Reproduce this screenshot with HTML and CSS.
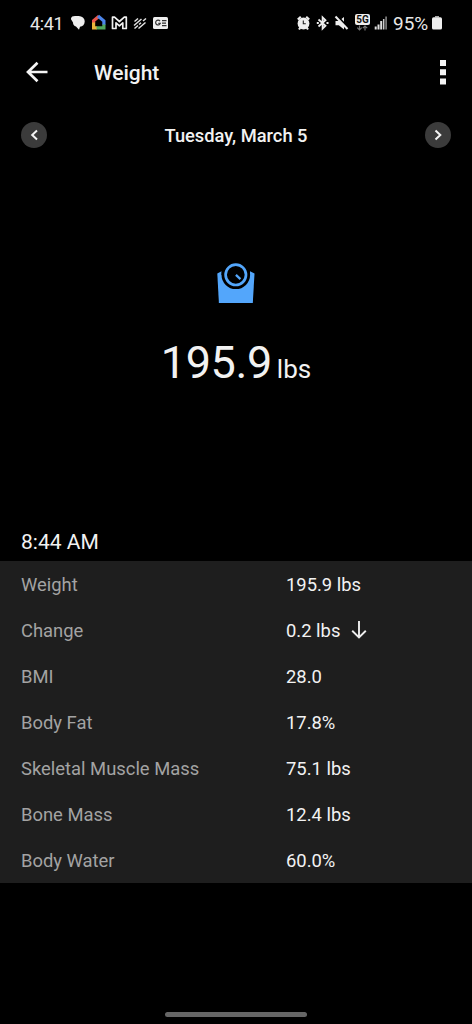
FILE: index.html
```html
<!DOCTYPE html>
<html lang="en">
<head>
<meta charset="utf-8">
<title>Weight</title>
<link rel="stylesheet" href="styles.css">
</head>
<body>
<div class="screen">
  <div class="status">
    <span class="clock">4:41</span>
    <svg class="notifications" width="98" height="18" viewBox="71 14 98 18">
      <path fill="#eee" d="M75 16h3.500a6 5.300 0 0 1 6.200 5.500c0 3-2 5-4.700 5.200L79 29.800 76 26.500c-2-.6-3-2-3-4L71 19.200C70.800 17 72.500 16 75 16z"/>
      <path fill="none" stroke="#e9564b" stroke-width="3.200" d="M93.600 23v-2.200L99 16.300"/>
      <path fill="none" stroke="#4c85ea" stroke-width="3.200" d="M98 16l5.900 4.900V25"/>
      <path fill="none" stroke="#e9b63b" stroke-width="3.200" d="M93.600 22.500v5.400H97"/>
      <path fill="none" stroke="#50a85c" stroke-width="3.200" d="M96.500 27.900h7.400v-3.500"/>
      <path d="M112.500 28.500V17.200h2l4.900 4.300 4.900-4.300h2v11.300h-3.500v-5.600l-3.400 3-3.400-3v5.600z" fill="none" stroke="#f1f1f1" stroke-width="1.700" stroke-linejoin="round"/>
      <path d="M134.500 21.500l3.500-3M134 25.500l7.500-6.500M139 24.500l2-1.700M143 21l3-2.500M134.500 28.500l3.500-3M138.500 28.500l7-6" stroke="#e2e2e2" stroke-width="1.500" fill="none"/>
      <rect x="153" y="17" width="15" height="12" rx="1.500" fill="#eee"/>
      <path d="M160 21.200a2.400 2.400 0 1 0 .3 2.200h-2M162 20.700h4.500M162 23.200h4M162 25.700h4.500" stroke="#333" stroke-width="1.200" fill="none"/>
    </svg>
    <svg class="system" width="91" height="22" viewBox="297 12 91 22">
      <circle cx="303.500" cy="23.500" r="5.900" fill="#eee"/>
      <path d="M297.800 19.500l3-2.700M309.200 19.500l-3-2.700M299 29.500l1.700-2.500M308 29.500l-1.700-2.500" stroke="#eee" stroke-width="2.200"/>
      <path d="M303.300 20.500v3.300h2.500" fill="none" stroke="#222" stroke-width="1.100"/>
      <path d="M318.500 19.500l7 6.300-2.900 2.900V17.300l2.900 2.900-7 6.300" fill="none" stroke="#eee" stroke-width="1.800"/>
      <path d="M316.800 23h2M326.500 23h2" stroke="#eee" stroke-width="2"/>
      <path d="M335.500 21h3.300l5.200-4v12.500l-5.200-4.300h-3.300z" fill="#eee"/>
      <path d="M336.800 15.500l12 13" stroke="#000" stroke-width="2"/>
      <path d="M335.500 16.500l12 12.500" stroke="#eee" stroke-width="2"/>
      <rect x="355" y="14" width="15" height="11" rx="2" fill="#eee"/>
      <text class="network" x="362.500" y="23" text-anchor="middle">5G</text>
      <path d="M359.500 25.500v4.500M357.300 27.700l2.200 2.200 2.200-2.200M365 30.500v-4.500M362.800 28.200l2.200-2.200 2.200 2.200" fill="none" stroke="#777" stroke-width="1.200"/>
      <path d="M375.700 26.500V29.500M378.500 24.500V29.500M381.200 21V29.500" stroke="#ddd" stroke-width="2"/>
      <path d="M383.700 19V29.500" stroke="#ccc" stroke-width="1.500"/><path d="M386.100 16.500V29.500" stroke="#777" stroke-width="1.800"/>
    </svg>
    <span class="percent">95%</span>
    <svg class="battery" width="10" height="14" viewBox="0 0 10 14"><path d="M3 0h4v1.500H3z" fill="#aaa"/><rect y="1.200" width="10" height="12.300" rx="1.600" fill="#eee"/></svg>
  </div>

  <header class="appbar">
    <svg width="22" height="22" viewBox="0 0 22 22"><path d="M21.500 11H2M11.500 1.700L2 11l9.500 9.300" fill="none" stroke="#f4f4f4" stroke-width="2.700"/></svg>
    <h1 class="title">Weight</h1>
    <svg class="more" width="6" height="25" viewBox="0 0 6 25"><path d="M0 0h6v6H0zM0 9.200h6v6H0zM0 18.400h6v6H0z" fill="#f4f4f4"/></svg>
  </header>

  <nav class="datebar">
    <span class="circle"><svg width="26" height="26" viewBox="0 0 26 26"><path d="M16 8.500L11.200 13l4.800 4.500" fill="none" stroke="#f4f4f4" stroke-width="2"/></svg></span>
    <span class="date">Tuesday, March 5</span>
    <span class="circle"><svg width="26" height="26" viewBox="0 0 26 26"><path d="M10.500 8.500l4.800 4.500-4.800 4.500" fill="none" stroke="#f4f4f4" stroke-width="2"/></svg></span>
  </nav>

  <section class="hero">
    <svg width="38" height="41" viewBox="0 0 38 41">
      <path d="M.3 10.500L4.500 8.300h28.500l4.500 2.200L35.800 40H1.900z" fill="#53a6fb"/>
      <path d="M4.500 0H33V12H4.500z" fill="#000"/>
      <circle cx="18.800" cy="11.800" r="14.300" fill="#000"/>
      <circle cx="18.800" cy="11.800" r="10.200" fill="none" stroke="#53a6fb" stroke-width="2.700"/>
      <path d="M18.900 11.900l4.500 4.200" stroke="#53a6fb" stroke-width="2.300"/>
    </svg>
    <div class="reading"><span class="number">195.9</span><span class="unit">lbs</span></div>
  </section>

  <h2 class="time">8:44 AM</h2>
  <dl class="metrics">
    <div class="row"><dt>Weight</dt><dd>195.9 lbs</dd></div>
    <div class="row"><dt>Change</dt><dd>0.2 lbs<svg class="down" width="16" height="20" viewBox="0 0 16 20"><path d="M8 1v16.500M1.200 10.800L8 17.500l6.800-6.700" fill="none" stroke="#eee" stroke-width="1.900"/></svg></dd></div>
    <div class="row"><dt>BMI</dt><dd>28.0</dd></div>
    <div class="row"><dt>Body Fat</dt><dd>17.8%</dd></div>
    <div class="row"><dt>Skeletal Muscle Mass</dt><dd>75.1 lbs</dd></div>
    <div class="row"><dt>Bone Mass</dt><dd>12.4 lbs</dd></div>
    <div class="row"><dt>Body Water</dt><dd>60.0%</dd></div>
  </dl>
  <div class="handle"></div>
</div>
</body>
</html>
```

FILE: styles.css
```css
* { box-sizing: border-box; }
body { margin: 0; background: #000; color: #f2f2f2; font-family: Roboto, sans-serif; }
svg { display: block; flex: none; }
.screen { width: 472px; height: 1024px; display: flex; flex-direction: column; background: #000; overflow: hidden; }
.status { height: 46px; flex: none; display: flex; align-items: center; padding: 0 30px; white-space: nowrap; }
.clock { width: 41px; font-size: 18px; letter-spacing: -.4px; color: #e8e8e8; }
.system { margin-left: 128px; }
.percent { width: 44px; padding-left: 5px; font-size: 19px; color: #e8e8e8; }
.network { font: 700 10px Roboto, sans-serif; fill: #111; }
.appbar { height: 52px; flex: none; display: flex; align-items: center; padding: 0 26px; }
.title { margin: 0 0 0 46px; padding-top: 2px; font-size: 21px; font-weight: 500; line-height: 26px; }
.more { margin-left: auto; }
.datebar { height: 74px; flex: none; display: flex; justify-content: space-between; align-items: center; padding: 0 21px; }
.circle { width: 26px; height: 26px; border-radius: 50%; background: #3b3b3b; }
.date { font-size: 18.300px; font-weight: 500; }
.hero { height: 348px; flex: none; display: flex; flex-direction: column; align-items: center; padding-top: 91px; }
.reading { display: flex; align-items: baseline; gap: 5px; margin-top: 32px; line-height: 54px; }
.number { font-size: 45px; letter-spacing: -.4px; }
.unit { font-size: 26px; }
.time { height: 41px; flex: none; margin: 0; padding: 2px 21px 0; font-size: 21px; font-weight: 400; line-height: 40px; }
.metrics { margin: 0; flex: none; background: #1e1e1e; font-size: 18.400px; }
.row { height: 46px; display: grid; grid-template-columns: 265px 1fr; align-items: center; padding: 0 0 0 21px; line-height: 25px; }
.row dt { color: #a3a3a3; }
.row dd { margin: 0; display: flex; align-items: center; }
.down { margin: -1px 0 0 11px; }
.handle { width: 142px; height: 5px; margin: auto auto 7px; border-radius: 3px; background: #666; }
```
